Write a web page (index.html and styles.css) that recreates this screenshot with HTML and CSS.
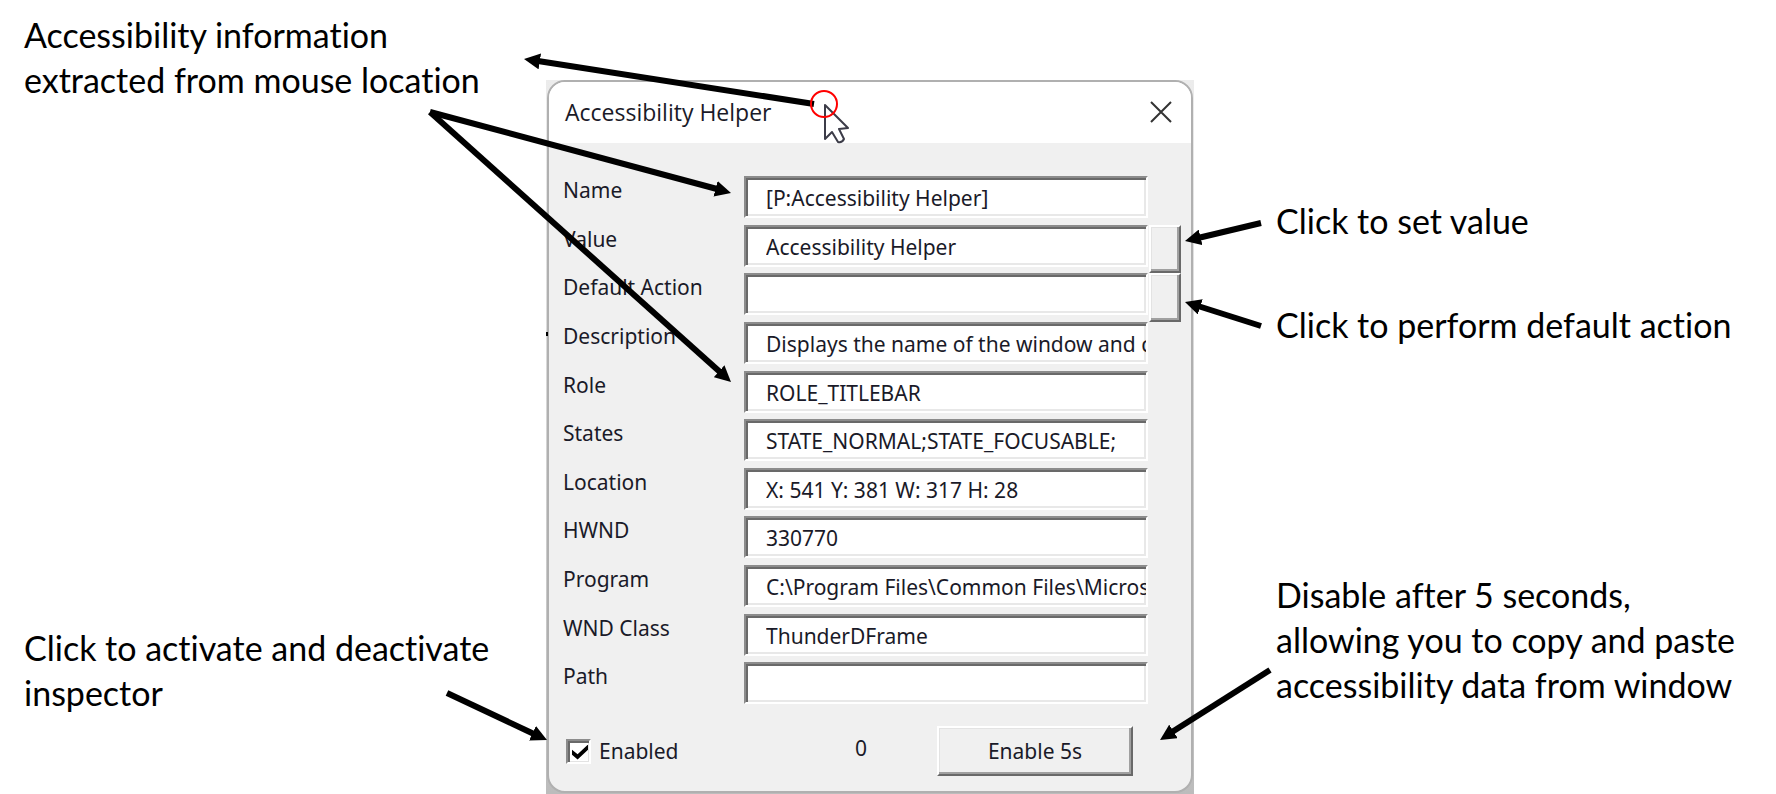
FILE: index.html
```html
<!DOCTYPE html>
<html lang="en">
<head>
<meta charset="utf-8">
<title>Accessibility Helper</title>
<link rel="stylesheet" href="styles.css">
</head>
<body>
<main class="stage">
  <div class="notes notes-left">
    <p class="note">Accessibility information<br>extracted from mouse location</p>
    <p class="note">Click to activate and deactivate<br>inspector</p>
  </div>

  <div class="backdrop">
    <section class="dialog" aria-labelledby="dialog-title">
      <header class="titlebar">
        <h1 class="title" id="dialog-title">Accessibility Helper</h1>
        <button class="close" type="button" aria-label="Close">
          <svg width="22" height="22" viewBox="0 0 22 22"><path d="M1 1L21 21M21 1L1 21" stroke="#333" stroke-width="2" fill="none"/></svg>
        </button>
      </header>
      <form class="body">
        <div class="fields">
          <div class="row"><label class="label" for="f-name">Name</label><input class="field" id="f-name" value="[P:Accessibility Helper]"></div>
          <div class="row"><label class="label" for="f-value">Value</label><input class="field" id="f-value" value="Accessibility Helper"><button class="button" type="button" aria-label="Set value"></button></div>
          <div class="row"><label class="label" for="f-action">Default Action</label><input class="field" id="f-action" value=""><button class="button" type="button" aria-label="Perform default action"></button></div>
          <div class="row"><label class="label" for="f-desc">Description</label><input class="field" id="f-desc" value="Displays the name of the window and contains controls"></div>
          <div class="row"><label class="label" for="f-role">Role</label><input class="field" id="f-role" value="ROLE_TITLEBAR"></div>
          <div class="row"><label class="label" for="f-states">States</label><input class="field" id="f-states" value="STATE_NORMAL;STATE_FOCUSABLE;"></div>
          <div class="row"><label class="label" for="f-loc">Location</label><input class="field" id="f-loc" value="X: 541 Y: 381 W: 317 H: 28"></div>
          <div class="row"><label class="label" for="f-hwnd">HWND</label><input class="field" id="f-hwnd" value="330770"></div>
          <div class="row"><label class="label" for="f-prog">Program</label><input class="field" id="f-prog" value="C:\Program Files\Common Files\Microsoft"></div>
          <div class="row"><label class="label" for="f-class">WND Class</label><input class="field" id="f-class" value="ThunderDFrame"></div>
          <div class="row"><label class="label" for="f-path">Path</label><input class="field" id="f-path" value=""></div>
        </div>
        <div class="footer">
          <label class="enabled"><input class="check" type="checkbox" checked>Enabled</label>
          <output class="count">0</output>
          <button class="button" type="button">Enable 5s</button>
        </div>
      </form>
    </section>
  </div>

  <div class="notes notes-right">
    <p class="note">Click to set value</p>
    <p class="note">Click to perform default action</p>
    <p class="note">Disable after 5 seconds,<br>allowing you to copy and paste<br>accessibility data from window</p>
  </div>

  <svg class="arrows" viewBox="0 0 1776 794" aria-hidden="true">
    <defs>
      <marker id="head" markerUnits="userSpaceOnUse" markerWidth="16" markerHeight="16" refX="16" refY="8" orient="auto"><path d="M0 0L16 8L0 16Z"/></marker>
    </defs>
    <path d="M546 332h2v4h-2z"/>
    <path d="M825 105V139L832 132L838 142Q842 143 844 139L839 129L848 128Z" fill="#fff" stroke="#3c3c48" stroke-width="2" stroke-linejoin="round"/>
    <g stroke="#000" stroke-width="6" fill="none">
      <path d="M814 104L538 61"/>
      <path d="M430 112L717 189"/>
      <path d="M430 112L720 372"/>
      <path d="M1261 223L1198 238"/>
      <path d="M1261 326L1198 306"/>
      <path d="M447 693L534 734"/>
      <path d="M1270 670L1172 732"/>
    </g>
    <g fill="none">
      <path d="M814 104L524 59" marker-end="url(#head)"/>
      <path d="M430 112L731 193" marker-end="url(#head)"/>
      <path d="M430 112L731 382" marker-end="url(#head)"/>
      <path d="M1261 223L1185 241" marker-end="url(#head)"/>
      <path d="M1261 326L1185 302" marker-end="url(#head)"/>
      <path d="M447 693L547 740" marker-end="url(#head)"/>
      <path d="M1270 670L1160 740" marker-end="url(#head)"/>
    </g>
    <circle cx="824" cy="104" r="13" fill="none" stroke="#f00" stroke-width="2"/>
  </svg>
</main>
</body>
</html>
```
FILE: styles.css
```css
* { box-sizing: border-box; }

body {
  margin: 0;
  background: #fff;
  color: #000;
}

.stage {
  position: relative;
  display: grid;
  grid-template-columns: 546fr 648fr 582fr;
  min-height: 100vh;
}

.notes {
  display: flex;
  flex-direction: column;
  font: 34px/45px Lato, sans-serif;
  font-variant-ligatures: none;
  white-space: nowrap;
}

.note { margin: 0; }

.notes-left {
  justify-content: space-between;
  padding: 12px 0 79px 24px;
}

.notes-right {
  padding: 198px 0 87px 82px;
  gap: 59px;
}

.notes-right .note:last-child { margin-top: auto; }

.backdrop {
  display: flex;
  min-width: 0;
  margin-top: 80px;
  background: linear-gradient(#ececec, #bcbcbc);
}

.dialog {
  display: flex;
  flex: 1;
  flex-direction: column;
  min-width: 0;
  margin: 0 1px 1px;
  border: 2px solid #b0b0b0;
  border-radius: 18px;
  background: #f0f0f0;
  overflow: hidden;
  font-family: "Noto Sans", sans-serif;
  font-size: 21px;
  color: #1a1a28;
}

.titlebar {
  display: flex;
  align-items: center;
  justify-content: space-between;
  height: 61px;
  padding: 0 19px 2px 16px;
  background: #fff;
}

.title {
  margin: 0;
  font: 23px/32px "Open Sans", sans-serif;
}

.close {
  display: flex;
  padding: 0;
  border: 0;
  background: none;
}

.body {
  display: flex;
  flex: 1;
  flex-direction: column;
  padding: 33px 10px 15px 14px;
}

.fields {
  display: grid;
  flex: 1;
  grid-auto-rows: 1fr;
}

.row {
  display: grid;
  grid-template-columns: 180px 1fr 32px;
  column-gap: 1px;
}

.label { line-height: 28px; }

.field {
  width: 100%;
  min-width: 0;
  height: 42px;
  padding: 2px 0 0 20px;
  border: 2px solid;
  border-color: #8c8c8c #fff #fff #8c8c8c;
  border-radius: 0;
  background: #fff;
  box-shadow: inset 2px 2px #696969, inset -2px -2px #e8e8e8;
  font: inherit;
  color: inherit;
}

.button {
  padding: 0;
  border: 2px solid;
  border-color: #fff #696969 #696969 #fff;
  border-radius: 0;
  background: #f0f0f0;
  box-shadow: inset -2px -2px #a0a0a0, inset 1px 1px #e3e3e3;
  font: inherit;
  color: inherit;
}

.footer {
  display: grid;
  grid-template-columns: 1fr 152px 196px;
  align-items: center;
  margin-top: 15px;
  padding-right: 48px;
}

.footer .button { height: 50px; }

.enabled {
  display: flex;
  align-items: center;
  gap: 8px;
  padding-left: 3px;
}

.check {
  appearance: none;
  width: 25px;
  height: 25px;
  margin: 0;
  border: 2px solid;
  border-color: #8c8c8c #fff #fff #8c8c8c;
  background: #fff;
  box-shadow: inset 2px 2px #696969, inset -1px -1px #e3e3e3;
}

.check:checked::before {
  content: "";
  display: block;
  width: 16px;
  height: 15px;
  margin: 4px;
  background: #000;
  clip-path: polygon(0 35%, 35% 65%, 100% 0, 100% 35%, 35% 100%, 0 68%);
}

.count {
  padding-bottom: 6px;
  text-align: center;
}

.arrows {
  position: absolute;
  inset: 0;
  width: 100%;
  height: 100%;
  pointer-events: none;
}
```
